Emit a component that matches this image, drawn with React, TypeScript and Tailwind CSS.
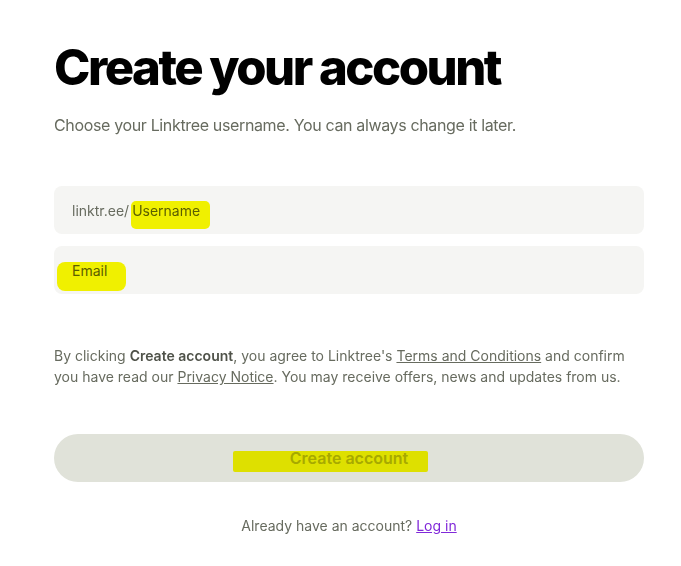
export default function App() {
  return (
    <div
      className="min-h-screen bg-white text-black"
      style={{ fontFamily: "Inter, 'Noto Sans', sans-serif" }}
    >
      <div className="w-[590px] ml-[54px] pt-[38px]">
        <h1 className="text-[49px] leading-[60px] font-extrabold tracking-[-0.051em] text-black">
          Create your account
        </h1>
        <p className="mt-[15px] text-[16px] leading-[24px] tracking-[-0.022em] text-[#676b5f]">
          Choose your Linktree username. You can always change it later.
        </p>

        <div className="mt-[49px] flex flex-col gap-[12px]">
          <div className="relative h-[48px] rounded-lg bg-[#f5f5f3] flex items-center px-[18px] text-[14px] text-[#676b5f]">
            <span>linktr.ee/</span>
            <span className="ml-[3px] text-[#5d6055]">Username</span>
            <span className="absolute left-[77px] top-[15px] h-[28px] w-[79px] rounded-[5px] bg-[#fafa00] mix-blend-multiply" />
          </div>
          <div className="relative h-[48px] rounded-lg bg-[#f5f5f3] flex items-center px-[18px] text-[14px] text-[#5d6055]">
            <span>Email</span>
            <span className="absolute left-[3px] top-[16px] h-[29px] w-[69px] rounded-[8px] bg-[#fafa00] mix-blend-multiply" />
          </div>
        </div>

        <p className="mt-[51px] text-[14px] leading-[21px] text-[#676b5f]">
          By clicking <span className="font-semibold text-[#4f5249]">Create account</span>, you agree to
          Linktree's <span className="underline">Terms and Conditions</span> and confirm you have read
          our <span className="underline">Privacy Notice</span>. You may receive offers, news and
          updates from us.
        </p>

        <button className="relative mt-[47px] h-[48px] w-full rounded-full bg-[#e0e2d9] text-[16px] font-semibold text-[#a8aaa2]">
          Create account
          <span className="absolute left-[179px] top-[17px] h-[21px] w-[195px] rounded-[2px] bg-[#fdfd00] mix-blend-multiply" />
        </button>

        <p className="mt-[33px] text-center text-[14px] leading-[21px] text-[#676b5f]">
          Already have an account?{" "}
          <span className="text-[#8129d9] underline">Log in</span>
        </p>
      </div>
    </div>
  );
}
